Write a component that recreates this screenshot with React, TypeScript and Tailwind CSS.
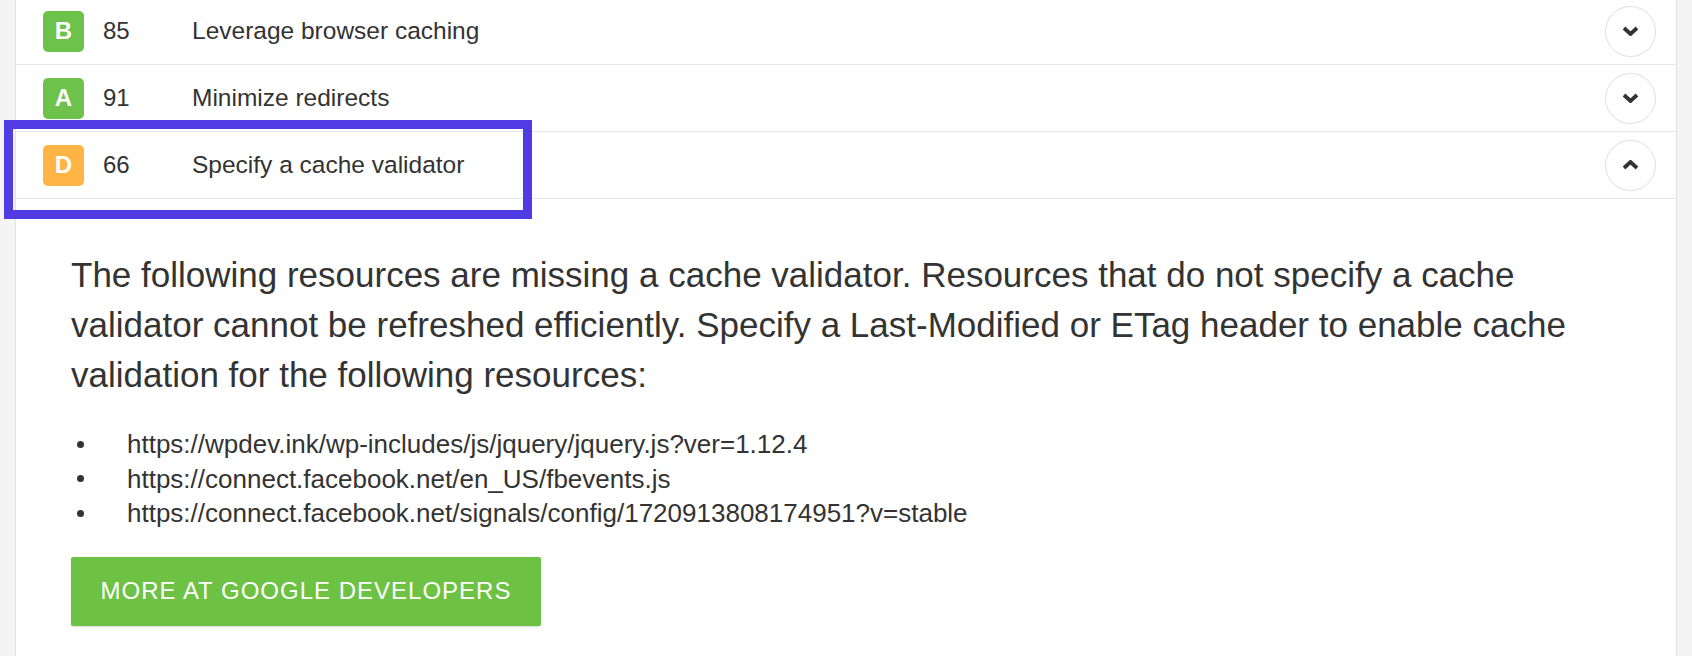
import React from 'react';

type Rule = { grade: string; score: number; title: string; open?: boolean };

const rules: Rule[] = [
  { grade: 'B', score: 85, title: 'Leverage browser caching' },
  { grade: 'A', score: 91, title: 'Minimize redirects' },
  { grade: 'D', score: 66, title: 'Specify a cache validator', open: true },
];

const resources = [
  'https://wpdev.ink/wp-includes/js/jquery/jquery.js?ver=1.12.4',
  'https://connect.facebook.net/en_US/fbevents.js',
  'https://connect.facebook.net/signals/config/1720913808174951?v=stable',
];

function Chevron({ up }: { up?: boolean }) {
  return (
    <svg width="17" height="10" viewBox="0 0 17 10" fill="none" className={up ? 'rotate-180' : ''}>
      <path d="M2 2l6.5 6 6.5-6" stroke="#333" strokeWidth={3.8} strokeLinejoin="miter" />
    </svg>
  );
}

function Row({ rule }: { rule: Rule }) {
  const badge = rule.grade === 'D' ? 'bg-[#ffb444]' : 'bg-[#6cc24a]';
  return (
    <div className="flex items-center h-[67px] border-b border-[#e6e6e6] pl-[27px] pr-[20px]">
      <div className={`w-[41px] h-[41px] rounded-[5px] ${badge} flex items-center justify-center text-white font-bold text-[24px]`}>
        {rule.grade}
      </div>
      <div className="w-[89px] ml-[19px] text-[24px] text-[#333]">{rule.score}</div>
      <div className="flex-1 text-[24.5px] text-[#333]">{rule.title}</div>
      <button className="w-[51px] h-[51px] rounded-full border-[1.5px] border-[#dedede] bg-white flex items-center justify-center">
        <Chevron up={rule.open} />
      </button>
    </div>
  );
}

export default function App() {
  return (
    <div className="relative w-[1692px] h-[656px] overflow-hidden bg-[#f4f4f4] font-['Liberation_Sans',Arial,sans-serif]">
      <div className="mx-[15px] h-[660px] -mt-[2px] bg-white border-x border-[#e2e2e2]">
        {rules.map((r) => (
          <Row key={r.title} rule={r} />
        ))}

        {/* Expanded rule details */}
        <div className="pl-[55px] pr-[60px] pt-[51px]">
          <p className="text-[35px] leading-[50px] text-[#333]">
            The following resources are missing a cache validator. Resources that do not specify a cache validator
            cannot be refreshed efficiently. Specify a Last-Modified or ETag header to enable cache validation for the
            following resources:
          </p>
          <ul className="mt-[27px]">
            {resources.map((url) => (
              <li key={url} className="flex items-center text-[26px] leading-[34.5px] text-[#333]">
                <span className="w-[7px] h-[7px] rounded-full bg-[#333] ml-[6px] mr-[43px]" />
                {url}
              </li>
            ))}
          </ul>
          <button className="mt-[26px] w-[470px] h-[69px] bg-[#6dc244] rounded-[2px] text-white text-[24px] tracking-[1px] shadow-[0_1px_2px_rgba(0,0,0,0.15)]">
            MORE AT GOOGLE DEVELOPERS
          </button>
        </div>
      </div>

      {/* highlight overlay */}
      <div className="absolute left-[4px] top-[120px] w-[528px] h-[99px] border-[9px] border-[#4f3de3] pointer-events-none" />
    </div>
  );
}
